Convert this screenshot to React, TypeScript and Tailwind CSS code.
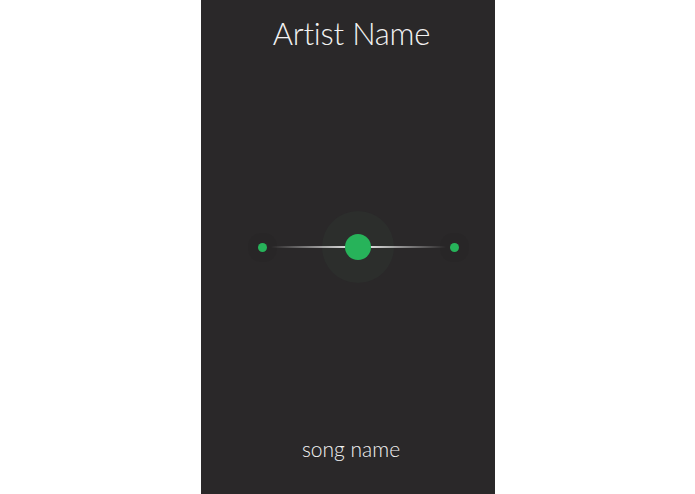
import React from "react";

function Dot() {
  return (
    <div className="w-[9px] h-[9px] shrink-0 rounded-full bg-[#27b35a] shadow-[0_0_0_10px_rgba(0,0,0,0.04)]" />
  );
}

export default function App() {
  return (
    <div className="w-full h-[494px] bg-white flex justify-center font-['Lato',sans-serif]">
      <div className="w-[294px] h-full bg-[#2a2829] flex flex-col items-center">
        {/* artist */}
        <h1 className="mt-[13px] pl-[8px] text-[31px] leading-[40px] font-light text-[#f2f2f2] tracking-[-0.2px]">
          Artist Name
        </h1>

        {/* slider */}
        <div className="mt-[154px] w-full h-[80px] flex items-center pl-[57px]">
          <Dot />
          <div className="relative mx-[4px] w-[175px] h-[2px] flex items-center justify-center">
            <div className="w-[72px] h-[72px] shrink-0 rounded-full bg-[#2d342f]/50 flex items-center justify-center">
              <div className="relative z-10 w-[26px] h-[26px] rounded-full bg-[#27b35a]" />
            </div>
            <div className="absolute inset-0 bg-gradient-to-r from-transparent via-[#f4f4f4] to-transparent" />
          </div>
          <Dot />
        </div>

        {/* song */}
        <p className="mt-[148px] pl-[7px] text-[21px] leading-[28px] font-light text-[#f2f2f2]">
          song name
        </p>
      </div>
    </div>
  );
}
